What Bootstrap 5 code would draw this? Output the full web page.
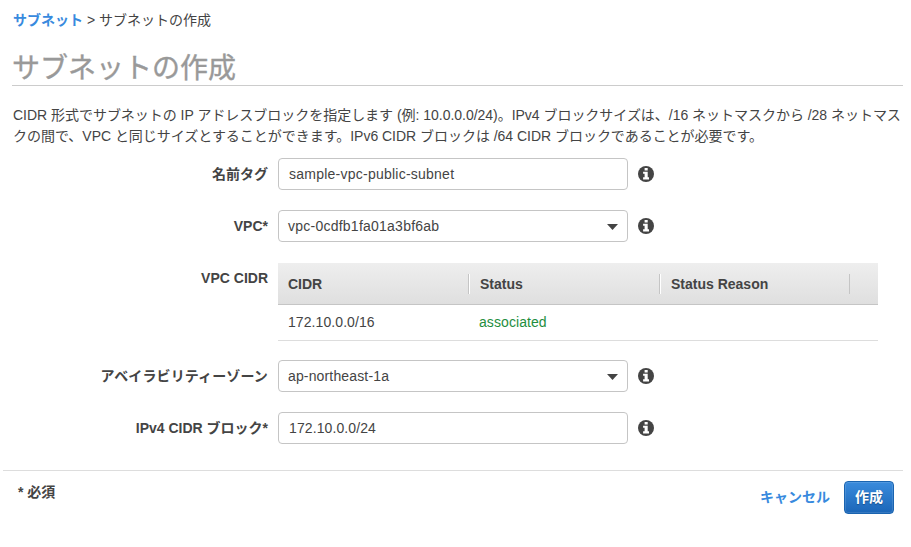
<!DOCTYPE html>
<html lang="ja">
<head>
<meta charset="utf-8">
<meta name="viewport" content="width=device-width, initial-scale=1">
<title>サブネットの作成</title>
<link href="https://cdn.jsdelivr.net/npm/bootstrap@5.3.0/dist/css/bootstrap.min.css" rel="stylesheet">
<style>
body { font-family: "Liberation Sans", "Noto Sans CJK JP", sans-serif; font-size: 14px; line-height: 21px; color: #444; background: #fff; overflow: hidden; }
.page { width: 903px; }
.crumbs { padding: 10px 0 0 13px; height: 31px; }
.link-aws { color: #388ade; font-weight: 700; text-decoration: none; }
.page-title { margin: 16px 0 0 12px; padding-top: 2px; height: 39px; line-height: 39px; font-size: 28px; font-weight: 400; color: #999; -webkit-text-stroke: .35px #999; border-bottom: 1px solid #ccc; }
.intro { margin: 19px 0 0 13px; white-space: nowrap; letter-spacing: -.025px; }
.rows { padding-top: 11px; }
.field { height: 32px; margin-bottom: 20px; }
.field-label { width: 268px; margin-right: 10px; text-align: right; font-weight: 700; flex: none; white-space: nowrap; }
.ctl, .ctl:focus { width: 350px; height: 32px; flex: none; padding: 0 14px 0 10px; font-size: 14px; line-height: 20px; color: #444; background: #fff; border: 1px solid #c5c5c5; border-radius: 4px; }
.ctl { letter-spacing: .24px; }
#block { letter-spacing: .1px; }
.pick { padding-right: 9px; padding-left: 9px; }
.caret { margin-top: 2px; }
.info { margin-left: 10px; flex: none; }
.cidr-row { margin-top: 21px; height: 78px; }
.cidr-label { padding-top: 5px; }
.cidr { width: 600px; }
.cidr-head { height: 42px; background: linear-gradient(#eee, #dfdfdf); border-bottom: 1px solid #c5c5c5; font-weight: 700; }
.cidr-body { height: 36px; border-bottom: 1px solid #ddd; letter-spacing: .08px; }
.cell { width: 191px; padding-left: 10px; flex: none; }
.cidr-head .cell { height: 20px; line-height: 21px; border-right: 1px solid #c5c5c5; box-shadow: 1px 0 #fff; }
.cidr-head .cell + .cell { padding-left: 11px; }
.cidr-head .cell:last-child { box-shadow: none; width: 190px; }
.ok { color: #1e8e3e; }
.zone { margin-top: 19px; }
.zone .field-label { letter-spacing: .12px; }
.zone .ctl { letter-spacing: .15px; }
.foot { margin: 26px 0 0 3px; width: 900px; border-top: 1px solid #ddd; }
.required { padding: 11px 0 0 15px; }
.actions { gap: 14px; height: 33px; margin: 10px 9px 0 0; }
.btn-create { width: 50px; height: 33px; padding: 0; font-size: 14px; line-height: 31px; font-weight: 700; color: #fff; border: 1px solid #1a64b0; border-radius: 4px; background: linear-gradient(#3a8bdc, #1b66b8); box-shadow: inset 0 0 0 1px rgba(255,255,255,.12); text-shadow: 0 1px 1px #164f8c; }
</style>
<script src="https://cdn.jsdelivr.net/npm/bootstrap@5.3.0/dist/js/bootstrap.bundle.min.js"></script>
</head>
<body>
<svg class="d-none" xmlns="http://www.w3.org/2000/svg">
  <symbol id="info" viewBox="0 0 16 16"><circle cx="8" cy="8" r="8" fill="#444"/><path fill="#fff" d="M6.6 2h3.1v2.5H6.600zM5.100 5.700h4.600v5.500H11v2.200H5.100v-2.200h1.500V7.800H5.100z"/></symbol>
  <symbol id="caret" viewBox="0 0 11 6"><path d="M0 0h11L5.500 6z" fill="#444"/></symbol>
</svg>
<main class="page">
  <nav class="crumbs"><a href="#" class="link-aws">サブネット</a> &gt; <span>サブネットの作成</span></nav>
  <h1 class="page-title mb-0">サブネットの作成</h1>
  <p class="intro mb-0">CIDR 形式でサブネットの IP アドレスブロックを指定します (例: 10.0.0.0/24)。IPv4 ブロックサイズは、/16 ネットマスクから /28 ネットマス<br>クの間で、VPC と同じサイズとすることができます。IPv6 CIDR ブロックは /64 CIDR ブロックであることが必要です。</p>
  <form class="rows">
    <div class="field d-flex align-items-center">
      <label class="field-label" for="name">名前タグ</label>
      <input id="name" class="form-control ctl" value="sample-vpc-public-subnet">
      <svg class="info" width="16" height="16"><use href="#info"/></svg>
    </div>
    <div class="field d-flex align-items-center">
      <span class="field-label">VPC*</span>
      <button type="button" class="btn ctl pick d-flex align-items-center justify-content-between"><span>vpc-0cdfb1fa01a3bf6ab</span><svg class="caret" width="11" height="6"><use href="#caret"/></svg></button>
      <svg class="info" width="16" height="16"><use href="#info"/></svg>
    </div>
    <div class="cidr-row d-flex">
      <span class="field-label cidr-label">VPC CIDR</span>
      <div class="cidr">
        <div class="cidr-head d-flex align-items-center"><div class="cell">CIDR</div><div class="cell">Status</div><div class="cell">Status Reason</div></div>
        <div class="cidr-body d-flex align-items-center"><div class="cell">172.10.0.0/16</div><div class="cell ok">associated</div><div class="cell"></div></div>
      </div>
    </div>
    <div class="field zone d-flex align-items-center">
      <span class="field-label">アベイラビリティーゾーン</span>
      <button type="button" class="btn ctl pick d-flex align-items-center justify-content-between"><span>ap-northeast-1a</span><svg class="caret" width="11" height="6"><use href="#caret"/></svg></button>
      <svg class="info" width="16" height="16"><use href="#info"/></svg>
    </div>
    <div class="field d-flex align-items-center mb-0">
      <label class="field-label" for="block">IPv4 CIDR ブロック*</label>
      <input id="block" class="form-control ctl" value="172.10.0.0/24">
      <svg class="info" width="16" height="16"><use href="#info"/></svg>
    </div>
  </form>
  <footer class="foot d-flex justify-content-between">
    <strong class="required">* 必須</strong>
    <div class="actions d-flex align-items-center"><a href="#" class="link-aws">キャンセル</a><button type="button" class="btn btn-create">作成</button></div>
  </footer>
</main>
</body>
</html>
